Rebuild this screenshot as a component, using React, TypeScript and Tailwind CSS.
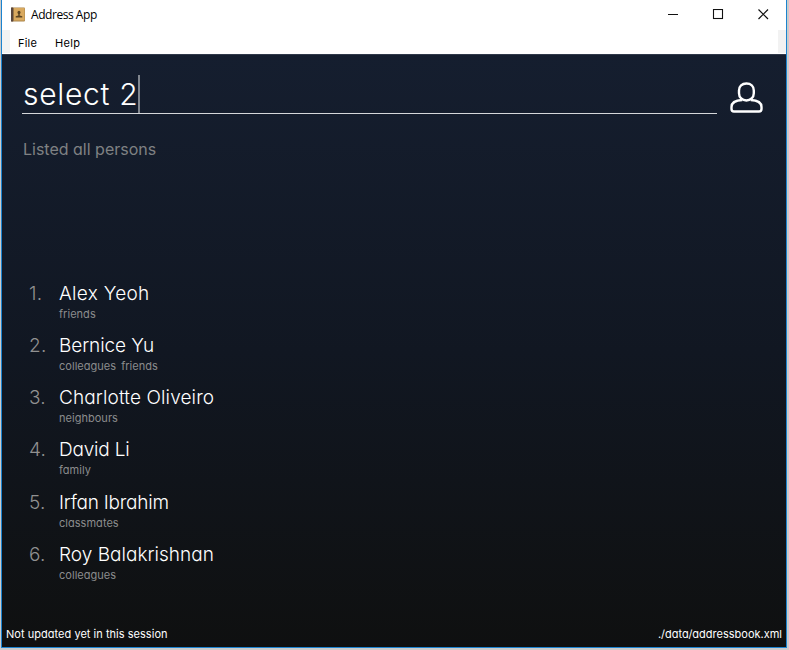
type Person = { name: string; tags: string[]; tracking: string };

const people: Person[] = [
  { name: "Alex Yeoh", tags: ["friends"], tracking: "tracking-[0.3px]" },
  { name: "Bernice Yu", tags: ["colleagues", "friends"], tracking: "tracking-[-0.1px]" },
  { name: "Charlotte Oliveiro", tags: ["neighbours"], tracking: "tracking-[0.12px]" },
  { name: "David Li", tags: ["family"], tracking: "tracking-[-0.2px]" },
  { name: "Irfan Ibrahim", tags: ["classmates"], tracking: "tracking-[-0.23px]" },
  { name: "Roy Balakrishnan", tags: ["colleagues"], tracking: "tracking-[0.02px]" },
];

function BookIcon() {
  return (
    <svg width="15" height="15" viewBox="0 0 15 15" className="shrink-0">
      <rect x="0" y="0.5" width="14" height="14" rx="1" fill="#a9844a" />
      <rect x="3" y="1" width="10.5" height="12.5" fill="#d9a95f" />
      <rect x="0" y="0.5" width="2.2" height="14" fill="#59463d" />
      <ellipse cx="8" cy="5.6" rx="1.5" ry="1.8" fill="#5b4524" />
      <path d="M7.3 6h1.4v2.6l2.6.6v1.3H4.7V9.2l2.6-.6z" fill="#5b4524" />
    </svg>
  );
}

function TitleBar() {
  return (
    <div className="flex h-[29px] items-center pl-[9px] pr-[17px]">
      <BookIcon />
      <span className="ml-[5px] font-['Open_Sans',sans-serif] text-[12px] leading-4 tracking-[-0.45px] text-black">Address App</span>
      <svg width="102" height="12" viewBox="0 0 102 12" className="ml-auto" fill="none" stroke="#111" strokeWidth="1">
        <path d="M1 5.5h10" />
        <rect x="46.5" y="0.5" width="9" height="9" strokeWidth="1.1" />
        <path d="M91.5 0.5l9.5 9.5M101 0.5L91.5 10" strokeWidth="1.2" />
      </svg>
    </div>
  );
}

function PersonIcon() {
  return (
    <svg width="34" height="34" viewBox="0 0 34 34" fill="none" stroke="#fff" strokeWidth="2.4" strokeLinejoin="round" className="shrink-0">
      <path d="M16.4 3.5c-4.4 0-7.4 2.700-7.400 7v2.700c0 4.200 3.300 7.300 7.400 7.300s7.400-3.100 7.400-7.300v-2.700c0-4.300-3-7-7.400-7z" />
      <path d="M12.300 20C6 20.300 1.500 22.500 1.500 27v2c0 1.800.8 2.500 2.500 2.500h25c1.700 0 2.500-.7 2.500-2.500v-2c0-4.500-4.500-6.700-10.800-7" />
    </svg>
  );
}

export default function App() {
  return (
    <div className="h-[650px] w-[789px] bg-[#cbcbcb] pl-px font-['Inter',sans-serif] [font-feature-settings:'cv11']">
      <div className="flex h-[648px] w-[786px] flex-col border-x border-b border-[#1c83cf] bg-white">
        <TitleBar />
        <div className="flex h-[25px] items-center justify-between">
          <div className="flex h-[23px] items-center">
            <div className="h-full w-2 bg-[#f2f2f2]" />
            <span className="mt-[3px] ml-2 text-[11px] tracking-[0.2px] text-black">File</span>
            <span className="mt-[3px] ml-[18px] text-[11px] tracking-[0.3px] text-black">Help</span>
          </div>
          <div className="h-[23px] w-2 bg-[#f2f2f2]" />
        </div>
        <div className="flex flex-1 flex-col border-t border-[#30394a] bg-linear-to-b from-[#151e2f] via-[#111722] to-[#0f1010]">
          <div className="flex h-[60px] pl-5">
            <div className="mt-[19px] flex h-[40px] w-[695px] border-b border-[#d5d7da] pl-px">
              <span className="text-[30px] leading-[41px] font-light tracking-[0.68px] text-white">select 2</span>
              <span className="mt-px h-[38px] w-[2px] bg-[#81868e]" />
            </div>
            <div className="mt-[25px] ml-[13px]"><PersonIcon /></div>
          </div>
          <div className="mt-[24px] pl-[21px] text-[16px] leading-5 text-[#7f8183]">Listed all persons</div>
          <div className="mt-[122.5px] flex flex-col">
            {people.map((p, i) => (
              <div key={p.name} className="flex h-[52.3px] pl-[27px]">
                <span className="w-[30px] text-[19px] leading-6 font-light tracking-[0.2px] text-[#919191]">{i + 1}.</span>
                <div>
                  <div className={"text-[19px] leading-6 font-light text-white " + p.tracking}>{p.name}</div>
                  <div className="flex gap-[5px] text-[11px] leading-4 tracking-[0.03px] text-[#8b8c8d]">
                    {p.tags.map((t) => <span key={t}>{t}</span>)}
                  </div>
                </div>
              </div>
            ))}
          </div>
          <div className="mt-auto flex h-[26px] items-center justify-between pr-[4px] pl-1 text-[11px] text-white">
            <span className="tracking-[0.03px]">Not updated yet in this session</span>
            <span>./data/addressbook.xml</span>
          </div>
        </div>
      </div>
    </div>
  );
}
